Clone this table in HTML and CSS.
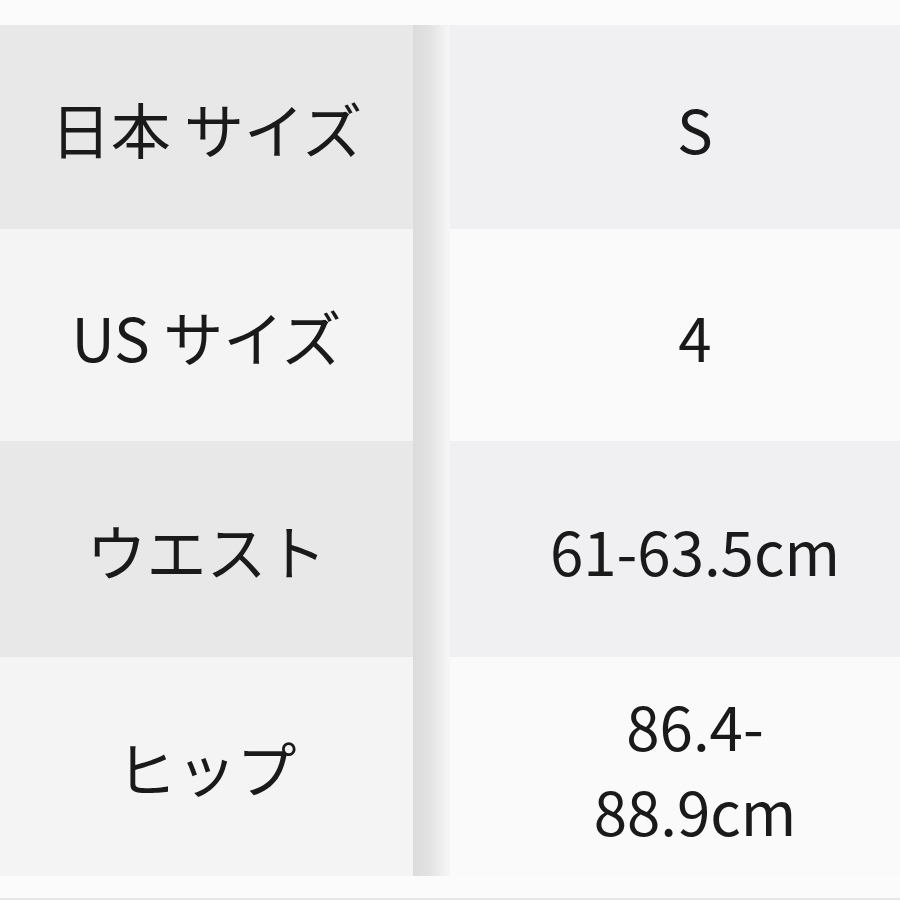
FILE: index.html
```html
<!DOCTYPE html>
<html lang="ja">
<head>
<meta charset="utf-8">
<link rel="stylesheet" href="styles.css">
</head>
<body>
<div class="page">
  <div class="table">
    <div class="col-left">
      <div class="cell l dark">日本 サイズ</div>
      <div class="cell l light">US サイズ</div>
      <div class="cell l dark">ウエスト</div>
      <div class="cell l light tall">ヒップ</div>
    </div>
    <div class="divider"></div>
    <div class="col-right">
      <div class="cell r dark">S</div>
      <div class="cell r light">4</div>
      <div class="cell r dark">61-63.5cm</div>
      <div class="cell r light tall">86.4-<br>88.9cm</div>
    </div>
  </div>
</div>
</body>
</html>
```
FILE: styles.css
```css
html, body {
  margin: 0;
  padding: 0;
  background: #fbfbfb;
  overflow: hidden;
}
.page {
  width: 900px;
  height: 900px;
  padding-top: 25px;
  box-sizing: border-box;
  background: #fbfbfb;
  border-bottom: 2px solid #e6e6e6;
}
.table {
  display: grid;
  grid-template-columns: 413px 36px 1fr;
  font-family: "Noto Sans CJK JP", "Noto Sans", sans-serif;
  font-weight: 400;
  color: #1a1a1a;
  font-size: 60px;
}
.col-left, .col-right {
  display: flex;
  flex-direction: column;
}
.cell {
  display: flex;
  align-items: center;
  justify-content: center;
  text-align: center;
  height: 204px;
  line-height: 85px;
}
.cell:nth-child(2) { height: 212px; }
.cell:nth-child(3) { height: 216px; }
.cell.tall { height: 219px; }
.l.dark { background: #e8e8e8; }
.l.light { background: #f4f4f4; }
.r.dark { background: #f0eff1; }
.r.light { background: #fafafa; }
.r { padding-left: 40px; }
.col-right { border-left: 1px solid #f4f4f4; }
.divider {
  background: linear-gradient(to right, #dcdcdc 0%, #e2e2e2 45%, #ededed 75%, #f6f6f6 100%);
}
```
